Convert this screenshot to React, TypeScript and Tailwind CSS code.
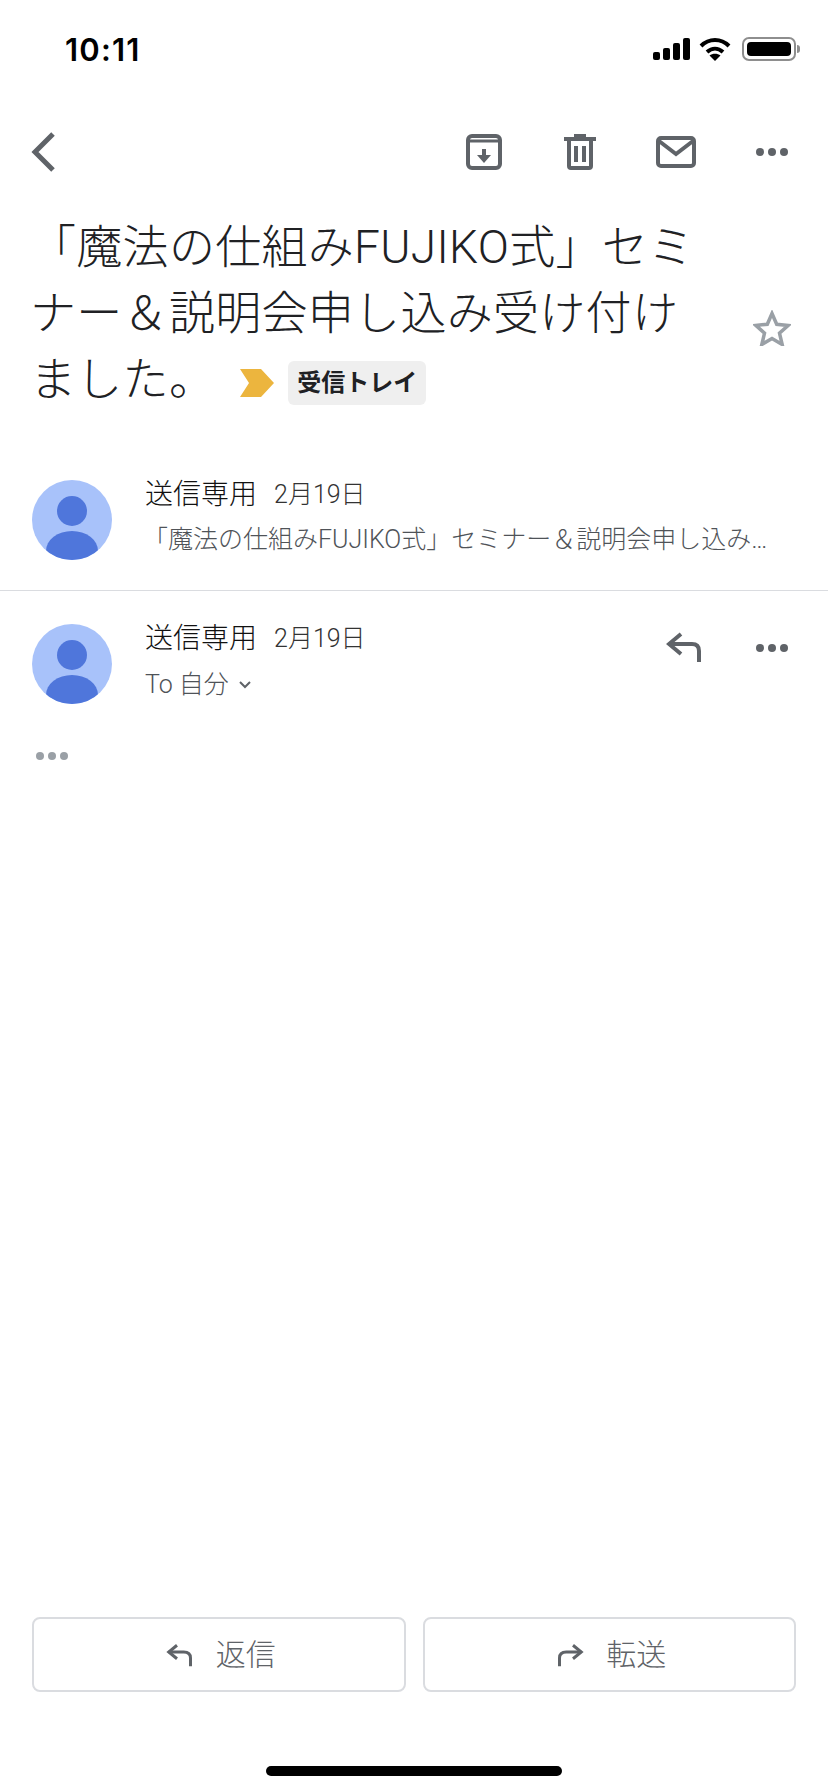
const messageFont = "font-['Roboto','Noto_Sans_CJK_JP',sans-serif]";

function Dots({ className = "fill-[#5f6368]" }: { className?: string }) {
  return (
    <svg width="32" height="8" viewBox="0 0 32 8" className={className}>
      <circle cx="4" cy="4" r="4" />
      <circle cx="16" cy="4" r="4" />
      <circle cx="28" cy="4" r="4" />
    </svg>
  );
}

function Avatar() {
  return (
    <svg width="80" height="80" viewBox="0 0 80 80" className="shrink-0">
      <defs>
        <clipPath id="avatar-clip">
          <circle cx="40" cy="40" r="40" />
        </clipPath>
      </defs>
      <circle cx="40" cy="40" r="40" fill="#a8c2fa" />
      <g clipPath="url(#avatar-clip)" fill="#4f76db">
        <circle cx="40" cy="31" r="15" />
        <ellipse cx="40" cy="71" rx="26" ry="20" />
      </g>
    </svg>
  );
}

function ReplyArrow({ size = 36 }: { size?: number }) {
  return (
    <svg width={size} height={size} viewBox="0 0 36 36" fill="none" stroke="#5f6368" strokeWidth="4">
      <path d="M15 4 3 14l12 10" />
      <path d="M3 14h23c5 0 7 3 7 7v11" />
    </svg>
  );
}

function SenderLine() {
  return (
    <div className="flex items-center h-[30px]">
      <span className="text-[28px] leading-[30px] font-light text-[#111111]">送信専用</span>
      <span className="ml-[17px] text-[25px] leading-[30px] font-light text-[#333333]">2月19日</span>
    </div>
  );
}

function StatusBar() {
  return (
    <div className="h-[116px] flex items-start justify-between pl-[65px] pr-[28px] pt-[31px]">
      <span className="font-['Inter',sans-serif] text-[31px] leading-[38px] font-semibold text-black tracking-[1.2px]">
        10:11
      </span>
      <div className="flex items-center gap-[9px] pt-[6px]">
        <svg width="37" height="22" viewBox="0 0 37 22" fill="#000">
          <rect x="0" y="14" width="7" height="8" rx="2" />
          <rect x="10" y="10" width="7" height="12" rx="2" />
          <rect x="20" y="5" width="7" height="17" rx="2" />
          <rect x="30" y="0" width="7" height="22" rx="2" />
        </svg>
        <svg width="32" height="24" viewBox="0 0 32 24" fill="none" stroke="#000" strokeWidth="4">
          <path d="M2 9c8-8 20-8 28 0" />
          <path d="M8 15c5-4.500 11-4.500 16 0" />
          <path d="M16 24l-5.500-5.500c3-2.500 8-2.500 11 0z" fill="#000" stroke="none" />
        </svg>
        <div className="flex items-center ml-[2px]">
          <div className="w-[54px] h-[24px] rounded-[7px] border-2 border-[#8e8e8e] p-[3px]">
            <div className="w-full h-full rounded-[4px] bg-black" />
          </div>
          <div className="w-[3px] h-[8px] rounded-r-full bg-[#8e8e8e] ml-[1px]" />
        </div>
      </div>
    </div>
  );
}

function Toolbar() {
  return (
    <div className="h-[72px] flex items-center pl-[31px] pr-[40px]">
      <svg width="24" height="40" viewBox="0 0 24 40" fill="none" stroke="#5f6368" strokeWidth="5">
        <path d="M22 2 4 20l18 18" />
      </svg>
      <div className="flex-1" />
      <svg width="36" height="36" viewBox="0 0 36 36" fill="none" stroke="#5f6368" strokeWidth="4" className="mr-[62px]">
        <rect x="2" y="2" width="32" height="32" rx="4" />
        <path d="M2 7h32" strokeWidth="3" />
        <path d="M18 15v9" />
        <path d="M11 21h14l-7 8z" fill="#5f6368" stroke="none" />
      </svg>
      <svg width="32" height="36" viewBox="0 0 32 36" fill="none" stroke="#5f6368" className="mr-[60px]">
        <path d="M10 0h12v3h10v4H0V3h10z" fill="#5f6368" stroke="none" />
        <path d="M5 7v25a2 2 0 0 0 2 2h18a2 2 0 0 0 2-2V7" strokeWidth="4" />
        <path d="M12 12v16M20 12v16" strokeWidth="4" />
      </svg>
      <svg width="40" height="32" viewBox="0 0 40 32" fill="none" stroke="#5f6368" strokeWidth="4" className="mr-[60px]">
        <rect x="2" y="2" width="36" height="28" rx="3" />
        <path d="M3 5l17 13L37 5" />
      </svg>
      <Dots />
    </div>
  );
}

function Subject() {
  return (
    <div className="mt-[26px] flex items-start pl-[30px] pr-[37px]">
      <h1 className="flex-1 text-[46px] leading-[66px] font-light tracking-[0.3px] text-[#202124] whitespace-nowrap">
        「魔法の仕組みFUJIKO式」セミ
        <br />
        ナー＆説明会申し込み受け付け
        <br />
        ました。
        <span className="inline-flex items-center align-middle ml-[25px] tracking-normal">
          <svg width="34" height="28" viewBox="0 0 34 28" fill="#ecb53e">
            <path d="M0 0h21l13 14-13 14H0l9-14z" />
          </svg>
          <span className="ml-[14px] h-[44px] w-[138px] flex items-center justify-center rounded-[6px] bg-[#efefef] text-[24px] font-bold text-[#202124]">
            受信トレイ
          </span>
        </span>
      </h1>
      <svg width="38" height="36" viewBox="0 0 38 36" fill="none" stroke="#9aa0a6" strokeWidth="3.500" className="mt-[96px] shrink-0">
        <path d="M19 3.500l4.700 10.800 11.600 1.100-8.800 7.700 2.700 11.400L19 28.500 8.800 34.500l2.700-11.400-8.800-7.700 11.600-1.100z" />
      </svg>
    </div>
  );
}

function Collapsed() {
  return (
    <div className="mt-[68px] h-[111px] flex items-start pl-[32px] pr-[32px] border-b border-[#dadce0]">
      <Avatar />
      <div className="ml-[33px] min-w-0">
        <SenderLine />
        <p className="mt-[15px] -ml-[2px] text-[25px] leading-[30px] font-light text-[#4f5358] whitespace-nowrap">
          「魔法の仕組みFUJIKO式」セミナー＆説明会申し込み…
        </p>
      </div>
    </div>
  );
}

function Expanded() {
  return (
    <div className="mt-[33px] flex items-start pl-[32px] pr-[40px]">
      <Avatar />
      <div className="ml-[33px] flex-1">
        <SenderLine />
        <div className="mt-[16px] flex items-center text-[25px] leading-[30px] font-light text-[#4f5358]">
          <span>To 自分</span>
          <svg width="12" height="8" viewBox="0 0 12 8" fill="none" stroke="#5f6368" strokeWidth="2" className="ml-[10px]">
            <path d="M1 1l5 5 5-5" />
          </svg>
        </div>
      </div>
      <div className="flex items-center h-[28px] mt-[10px]">
        <ReplyArrow />
        <div className="w-[54px]" />
        <Dots />
      </div>
    </div>
  );
}

function ActionButton({ label, flip }: { label: string; flip?: boolean }) {
  return (
    <button className="flex-1 h-[75px] pl-[4px] flex items-center justify-center gap-[22px] rounded-[8px] border-2 border-[#dadce0] text-[30px] font-light text-[#5f6368]">
      <span className={flip ? "-scale-x-100" : ""}>
        <svg width="28" height="24" viewBox="0 0 36 32" fill="none" stroke="#5f6368" strokeWidth="4">
          <path d="M14 3 3 12l11 9" />
          <path d="M3 12h20c6 0 9 3 9 8v11" />
        </svg>
      </span>
      <span>{label}</span>
    </button>
  );
}

export default function App() {
  return (
    <main className={`h-[1792px] flex flex-col bg-white ${messageFont}`}>
      <StatusBar />
      <Toolbar />
      <Subject />
      <Collapsed />
      <Expanded />
      <div className="mt-[48px] pl-[36px]">
        <Dots className="fill-[#9aa0a6]" />
      </div>
      <div className="flex-1" />
      <div className="flex gap-[17px] px-[32px]">
        <ActionButton label="返信" />
        <ActionButton label="転送" flip />
      </div>
      <div className="h-[100px] flex items-start justify-center pt-[74px]">
        <div className="w-[296px] h-[10px] rounded-full bg-black" />
      </div>
    </main>
  );
}
